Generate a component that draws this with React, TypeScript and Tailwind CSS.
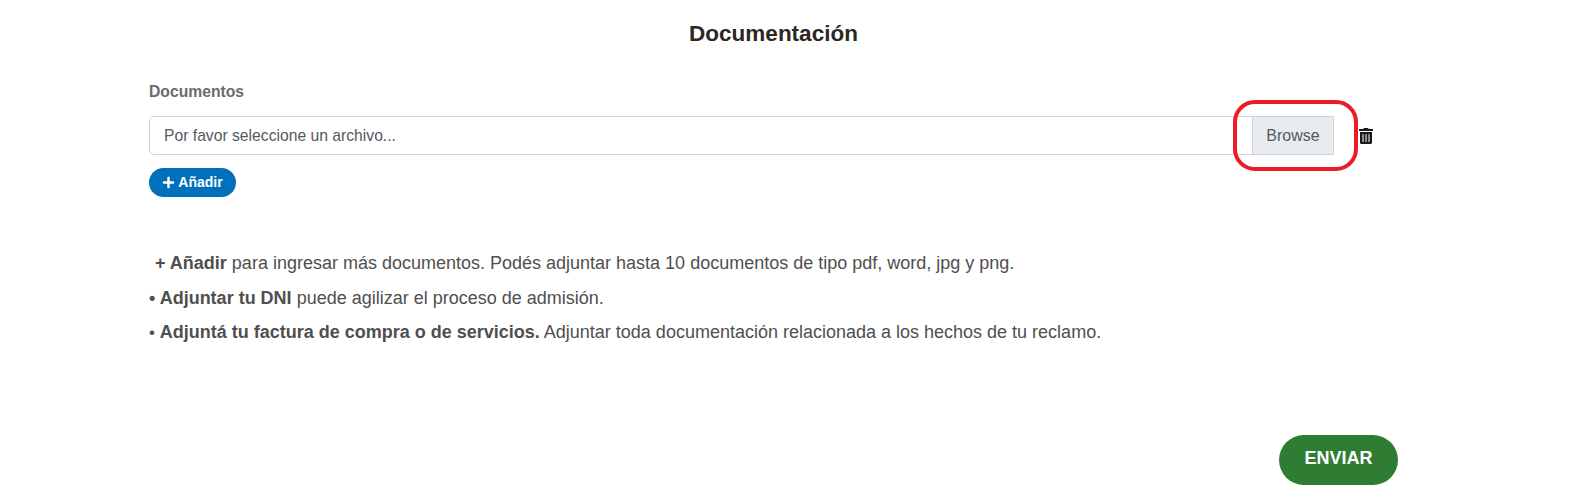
import { FaPlus, FaTrashAlt } from "react-icons/fa";

const FONT = "font-['Liberation_Sans',Arial,sans-serif]";

export default function App() {
  return (
    <div className={`${FONT} h-[503px] w-full overflow-hidden bg-white pl-[149px] pr-[175px] text-[#4f4f4f]`}>
      <h2 className="pt-[21px] text-center text-[22.5px] leading-[26px] font-bold text-[#2b2722]">
        Documentación
      </h2>

      <label className="mt-[36px] block text-[15.7px] leading-[18px] font-bold text-[#6b6b6b]">
        Documentos
      </label>

      <div className="mt-[15px] flex items-center">
        <div className="relative flex h-[39px] w-[1185px] items-center rounded-l-[5px] border border-[#ced4da] bg-white">
          <span className="flex-1 pl-[14px] text-[15.7px] text-[#55595e]">
            Por favor seleccione un archivo...
          </span>
          <span className="flex h-full w-[81px] items-center justify-center border-l border-[#ced4da] bg-[#e9ecef] text-[16px] text-[#55595e]">
            Browse
          </span>
          {/* red marker drawn over the screenshot */}
          <div className="absolute top-[-17px] left-[1083px] h-[71px] w-[125px] rounded-[22px] border-[4px] border-[#ed1c24]" />
        </div>
        <FaTrashAlt className="ml-[25px] h-[16px] w-[14px] text-[#1a1a1a]" />
      </div>

      <button className="mt-[13px] flex h-[29px] w-[87px] items-center justify-center gap-[3px] rounded-full bg-[#0070bd] text-[14px] font-bold text-white">
        <FaPlus className="h-[13px] w-[13px]" />
        Añadir
      </button>

      <div className="mt-[55px] space-y-[12.5px] text-[18px] leading-[22px]">
        <p className="pl-[6px]">
          <strong>+ Añadir</strong> para ingresar más documentos. Podés adjuntar hasta 10 documentos de tipo pdf, word, jpg y png.
        </p>
        <p>
          <strong>• Adjuntar tu DNI</strong> puede agilizar el proceso de admisión.
        </p>
        <p>
          <span className="text-[17px]">• </span>
          <strong>Adjuntá tu factura de compra o de servicios.</strong> Adjuntar toda documentación relacionada a los hechos de tu reclamo.
        </p>
      </div>

      <div className="mt-[91px] flex justify-end">
        <button className="h-[50px] w-[119px] rounded-full bg-[#2e7d32] pb-[3px] text-[18px] font-bold text-white">
          ENVIAR
        </button>
      </div>
    </div>
  );
}
